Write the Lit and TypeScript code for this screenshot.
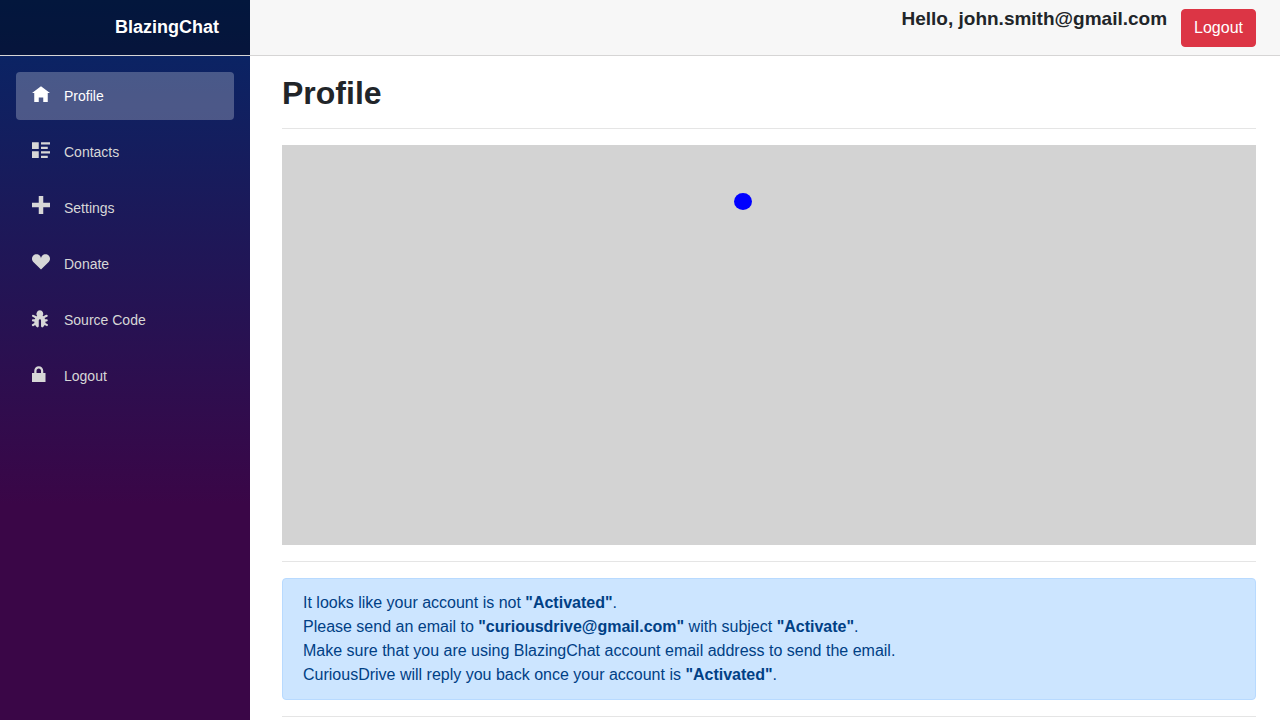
import { LitElement, html, css, svg } from "lit";
import { customElement, property, state } from "lit/decorators.js";
import { classMap } from "lit/directives/class-map.js";

interface NavEntry {
  label: string;
  icon: string;
}

interface Glyph {
  viewBox: string;
  d: string;
}

const glyphs: Record<string, Glyph> = {
  home: {
    viewBox: "0 -1 8 8",
    d: "M4 0l-4 3h1v4h2v-2h2v2h2v-4.03l1 .03-4-3z",
  },
  list: {
    viewBox: "0 -1 8 8",
    d: "M0 0v3h3v-3h-3zm4 0v1h4v-1h-4zm0 2v1h3v-1h-3zm-4 2v3h3v-3h-3zm4 0v1h4v-1h-4zm0 2v1h3v-1h-3z",
  },
  plus: {
    viewBox: "0 0 8 8",
    d: "M3 0v3h-3v2h3v3h2v-3h3v-2h-3v-3h-2z",
  },
  heart: {
    viewBox: "0 0 8 8",
    d: "M2 1c-.55 0-1.04.23-1.41.59-.36.36-.59.85-.59 1.41 0 .55.23 1.04.59 1.41l3.41 3.41 3.41-3.41c.36-.36.59-.85.59-1.41 0-.55-.23-1.04-.59-1.41-.36-.36-.85-.59-1.41-.59-.55 0-1.04.23-1.41.59-.36.36-.59.85-.59 1.41 0-.55-.23-1.04-.59-1.41-.36-.36-.85-.59-1.41-.59z",
  },
  bug: {
    viewBox: "0 -1 8 8",
    d: "M3.5 0c-1.19 0-1.98 1.69-1.19 2.5-.09.07-.2.14-.28.22l-1.31-.66a.5.5 0 0 0-.34-.06.5.5 0 0 0-.09.94l1.16.56c-.09.16-.19.33-.25.5h-.69a.5.5 0 0 0-.09 0 .5.5 0 1 0 .09 1h.5c0 .23.02.45.06.66l-.78.41a.5.5 0 1 0 .44.88l.66-.34c.25.46.62.85 1.03 1.09.35-.19.59-.44.59-.72v-1.44a.5.5 0 0 0 0-.09v-.81a.5.5 0 0 0 0-.22c.05-.23.26-.41.5-.41.28 0 .5.22.5.5v.88a.5.5 0 0 0 0 .09v.06a.5.5 0 0 0 0 .09v1.34c0 .27.24.53.59.72.41-.25.79-.63 1.03-1.09l.66.34a.5.5 0 1 0 .44-.88l-.78-.41c.04-.21.06-.43.06-.66h.5a.5.5 0 1 0 0-1h-.69c-.06-.17-.16-.34-.25-.5l1.16-.56a.5.5 0 0 0-.31-.94.5.5 0 0 0-.13.06l-1.31.66c-.09-.08-.19-.15-.28-.22.78-.83 0-2.5-1.19-2.5z",
  },
  lock: {
    viewBox: "0 -1 8 8",
    d: "M3 0c-1.1 0-2 .9-2 2v1h-1v4h6v-4h-1v-1c0-1.1-.9-2-2-2zm0 1c.56 0 1 .44 1 1v1h-2v-1c0-.56.44-1 1-1z",
  },
};

@customElement("nav-icon")
export class NavIcon extends LitElement {
  @property() name = "home";

  static styles = css`
    :host {
      display: block;
      width: 18px;
      height: 18px;
    }
    .glyph {
      display: block;
      width: 100%;
      height: 100%;
      overflow: visible;
      fill: currentColor;
    }
  `;

  render() {
    const glyph = glyphs[this.name];
    return html`<svg class="glyph" viewBox=${glyph.viewBox} aria-hidden="true">
      ${svg`<path d=${glyph.d}></path>`}
    </svg>`;
  }
}

@customElement("side-bar")
export class SideBar extends LitElement {
  @property({ attribute: false }) entries: NavEntry[] = [];
  @property() active = "";

  static styles = css`
    :host {
      display: block;
      background: linear-gradient(180deg, rgb(5, 39, 103) 0%, #3a0647 70%);
    }
    .brand-row {
      box-sizing: border-box;
      display: flex;
      align-items: center;
      justify-content: flex-end;
      height: 56px;
      padding: 0 31px 2px 16px;
      background: rgba(0, 0, 0, 0.4);
      border-bottom: 1px solid #d6d5d5;
    }
    .brand {
      color: #fff;
      font-size: 18px;
      font-weight: 700;
      text-decoration: none;
    }
    .links {
      display: flex;
      flex-direction: column;
      gap: 8px;
      padding: 16px;
    }
    .link {
      display: grid;
      grid-template-columns: 18px 1fr;
      align-items: center;
      column-gap: 14px;
      padding: 0 16px;
      border-radius: 4px;
      color: #d7d7d7;
      font-size: 14px;
      line-height: 48px;
      text-decoration: none;
    }
    .link:hover {
      background: rgba(255, 255, 255, 0.1);
      color: #fff;
    }
    .link.current {
      background: rgba(255, 255, 255, 0.25);
      color: #fff;
    }
    .icon {
      margin-bottom: 6px;
    }
  `;

  render() {
    return html`
      <div class="brand-row"><a class="brand" href="#">BlazingChat</a></div>
      <nav class="links">
        ${this.entries.map(
          (entry) => html`<a
            class=${classMap({ link: true, current: entry.label === this.active })}
            href="#"
            ><nav-icon class="icon" name=${entry.icon}></nav-icon
            ><span>${entry.label}</span></a
          >`
        )}
      </nav>
    `;
  }
}

@customElement("app-root")
export class AppRoot extends LitElement {
  @state() private entries: NavEntry[] = [
    { label: "Profile", icon: "home" },
    { label: "Contacts", icon: "list" },
    { label: "Settings", icon: "plus" },
    { label: "Donate", icon: "heart" },
    { label: "Source Code", icon: "bug" },
    { label: "Logout", icon: "lock" },
  ];

  static styles = css`
    :host {
      display: grid;
      grid-template-columns: 250px minmax(0, 1fr);
      min-height: 100vh;
      background: #fff;
      color: #212529;
      font-family: "Liberation Sans", Arial, sans-serif;
      font-size: 16px;
      line-height: 24px;
    }
    .bar {
      box-sizing: border-box;
      display: flex;
      align-items: flex-start;
      justify-content: flex-end;
      gap: 14px;
      height: 56px;
      padding: 9px 24px 0 32px;
      background: #f7f7f7;
      border-bottom: 1px solid #d6d5d5;
    }
    .greeting {
      margin: 0;
      font-size: 19px;
      line-height: 19px;
      font-weight: 700;
    }
    .logout {
      padding: 6px 12px;
      border: 1px solid #dc3545;
      border-radius: 4px;
      background: #dc3545;
      color: #fff;
      font: inherit;
      cursor: pointer;
    }
    .content {
      display: flex;
      flex-direction: column;
      gap: 16px;
      padding: 18px 24px 0 32px;
    }
    .title {
      margin: 0;
      font-size: 32px;
      line-height: 38px;
      font-weight: 700;
    }
    .rule {
      width: 100%;
      height: 1px;
      margin: 0;
      border: 0;
      background: rgba(0, 0, 0, 0.1);
    }
    .board {
      display: block;
      width: 100%;
      height: 400px;
      background: lightgray;
    }
    .notice {
      padding: 12px 20px;
      border: 1px solid #b8daff;
      border-radius: 4px;
      background: #cce5ff;
      color: #004085;
    }
  `;

  render() {
    return html`
      <side-bar .entries=${this.entries} active="Profile"></side-bar>
      <div>
        <header class="bar">
          <h3 class="greeting">Hello, john.smith@gmail.com</h3>
          <button class="logout" type="button">Logout</button>
        </header>
        <main class="content">
          <h1 class="title">Profile</h1>
          <hr class="rule" />
          <svg class="board" role="img" aria-label="Ball">
            <ellipse cx="461" cy="56.5" rx="9" ry="8.5" fill="blue"></ellipse>
          </svg>
          <hr class="rule" />
          <div class="notice" role="alert">
            It looks like your account is not <b>"Activated"</b>.<br />
            Please send an email to <b>"curiousdrive@gmail.com"</b> with subject
            <b>"Activate"</b>.<br />
            Make sure that you are using BlazingChat account email address to
            send the email.<br />
            CuriousDrive will reply you back once your account is
            <b>"Activated"</b>.
          </div>
          <hr class="rule" />
        </main>
      </div>
    `;
  }
}
